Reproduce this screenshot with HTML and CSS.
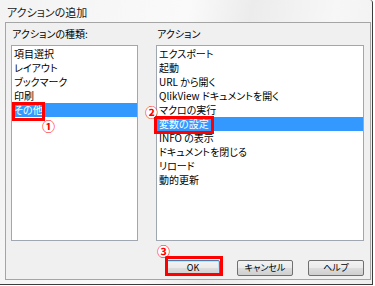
FILE: index.html
```html
<!DOCTYPE html>
<html lang="ja">
<head>
    <meta charset="UTF-8">
    <title>アクションの追加</title>
    <link rel="stylesheet" href="styles.css">
</head>
<body>
    <div class="window">
        <div class="titlebar">アクションの追加</div>

        <div class="client">
            <div class="panes">
                <div class="pane pane-left">
                    <div class="pane-label">アクションの種類:</div>
                    <ul class="listbox">
                        <li>項目選択</li>
                        <li>レイアウト</li>
                        <li>ブックマーク</li>
                        <li>印刷</li>
                        <li class="selected">その他</li>
                    </ul>
                </div>
                <div class="pane pane-right">
                    <div class="pane-label">アクション</div>
                    <ul class="listbox">
                        <li>エクスポート</li>
                        <li>起動</li>
                        <li>URL から開く</li>
                        <li>QlikView ドキュメントを開く</li>
                        <li>マクロの実行</li>
                        <li class="selected">変数の設定</li>
                        <li>INFO の表示</li>
                        <li>ドキュメントを閉じる</li>
                        <li>リロード</li>
                        <li>動的更新</li>
                    </ul>
                </div>
            </div>

            <div class="buttons">
                <button class="btn btn-default">OK</button>
                <button class="btn">キャンセル</button>
                <button class="btn">ヘルプ</button>
            </div>
        </div>

        <!-- annotations drawn over the dialog -->
        <span class="mark mark-1"></span>
        <span class="mark mark-2"></span>
        <span class="mark mark-3"></span>
        <span class="num num-1">①</span>
        <span class="num num-2">②</span>
        <span class="num num-3">③</span>
    </div>
</body>
</html>
```

FILE: styles.css
```css
body {
    margin: 0;
    background-color: #ffffff;
    font-family: "Noto Sans CJK JP", "Liberation Sans", sans-serif;
    font-size: 10px;
    font-feature-settings: "palt";
    color: #000000;
}

.window {
    position: relative;
    width: 372px;
    height: 284px;
    border-right: 1px solid #3c3c3c;
    border-bottom: 1px solid #3c3c3c;
    border-top-right-radius: 3px;
    background: linear-gradient(100deg, #f3f3f3 0%, #fafafa 45%, #ececec 60%, #f7f7f7 80%, #eeeeee 100%);
}

.titlebar {
    height: 22px;
    line-height: 24px;
    padding-left: 7px;
    font-size: 11px;
    color: #1a1a1a;
}

.client {
    margin-left: 5px;
    width: 364px;
    height: 256px;
    border: 1px solid #a5a5a5;
    background-color: #f0f0f0;
    display: flex;
    flex-direction: column;
}

.panes {
    display: flex;
    gap: 18px;
    padding: 4px 0 0 5px;
}

.pane-label {
    height: 14px;
    line-height: 14px;
    margin-bottom: 4px;
    padding-left: 1px;
}

.listbox {
    list-style: none;
    margin: 0;
    padding: 1px 0;
    height: 192px;
    border: 1px solid #a0a7b0;
    background-color: #ffffff;
}

.pane-left .listbox {
    width: 125px;
}

.pane-right .listbox {
    width: 206px;
}

.listbox li {
    height: 14px;
    line-height: 14px;
    padding-left: 2px;
    white-space: nowrap;
}

.listbox li.selected {
    background-color: #3399ff;
    color: #ffffff;
}

.buttons {
    display: flex;
    justify-content: flex-end;
    gap: 15px;
    margin-top: 19px;
    padding-right: 6px;
}

.btn {
    width: 56px;
    height: 16px;
    padding: 0;
    border: 1px solid #707070;
    border-radius: 2px;
    background: linear-gradient(#f2f2f2 0%, #ebebeb 50%, #dddddd 51%, #cfcfcf 100%);
    font-family: inherit;
    font-size: 9px;
    font-feature-settings: "palt";
    color: #000000;
    line-height: 14px;
}

.btn-default {
    width: 54px;
    border-color: #3c7fb1;
    box-shadow: inset 0 0 0 1px #b8e3f8;
    margin-right: 2px;
}

.mark {
    position: absolute;
    border: 3px solid #ff0000;
    box-sizing: border-box;
}

.mark-1 {
    left: 12px;
    top: 102px;
    width: 33px;
    height: 19px;
}

.mark-2 {
    left: 154px;
    top: 116px;
    width: 60px;
    height: 18px;
}

.mark-3 {
    left: 165px;
    top: 256px;
    width: 58px;
    height: 20px;
}

.num {
    position: absolute;
    width: 12px;
    height: 12px;
    line-height: 12px;
    text-align: center;
    font-size: 13px;
    color: #ff0000;
    font-weight: bold;
    background-color: #ffffff;
    border-radius: 50%;
}

.num-1 {
    left: 42px;
    top: 120px;
}

.num-2 {
    left: 145px;
    top: 106px;
}

.num-3 {
    left: 157px;
    top: 245px;
}
```
